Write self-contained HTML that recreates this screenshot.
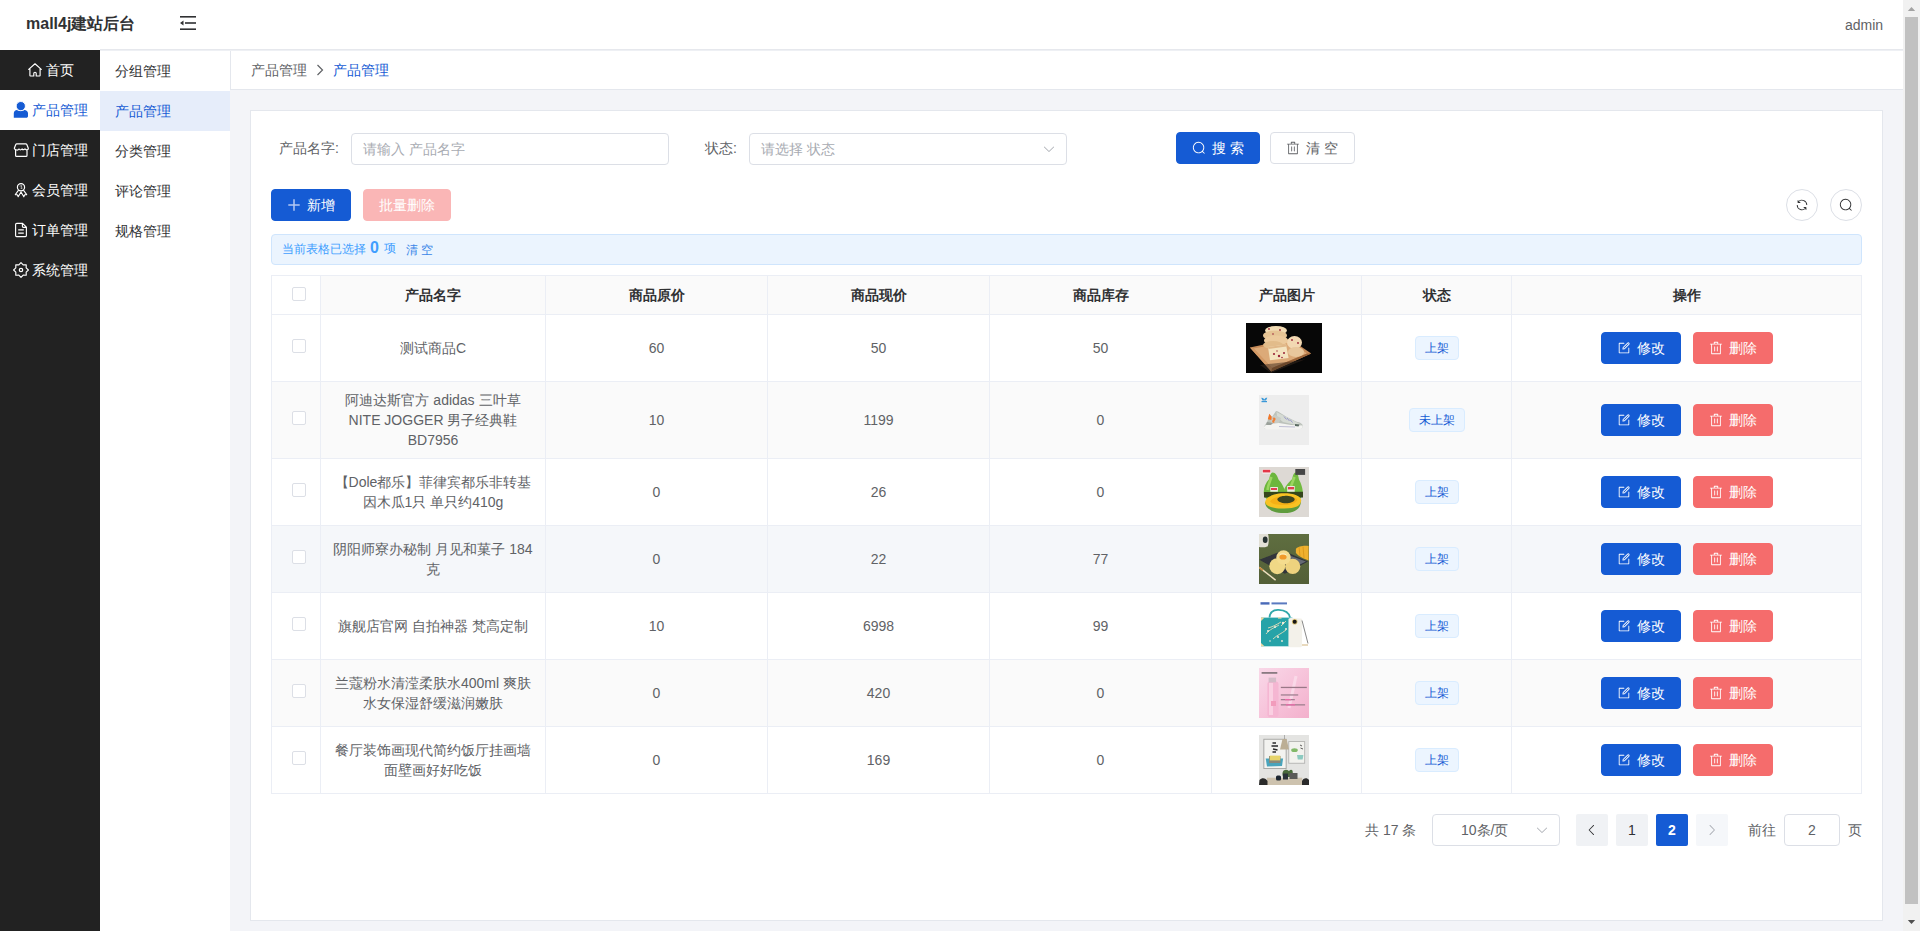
<!DOCTYPE html>
<html><head><meta charset="utf-8">
<style>
*{box-sizing:border-box;margin:0;padding:0}
html,body{width:1920px;height:931px;overflow:hidden;background:#fff}
body{font-family:"Liberation Sans",sans-serif;font-size:14px;color:#606266;position:relative}
.abs{position:absolute}
svg{display:block}
/* header */
#header{left:0;top:0;width:1903px;height:50px;background:#fff}
#logo{left:26px;top:13px;font-size:16px;font-weight:bold;color:#303133;line-height:22px;white-space:nowrap}
#fold{left:180px;top:16px;width:16px;height:14px}
#admin{left:1845px;top:15px;font-size:14px;color:#606266;line-height:20px}
#hline{left:100px;top:49px;width:1803px;height:2px;background:linear-gradient(#e6e8ed 50%,#eef0f4 50%);z-index:5}
/* sidebar */
#side{left:0;top:50px;width:100px;height:881px;background:#222}
.mi{position:absolute;left:0;width:100px;height:40px;color:#fff;font-size:14px;line-height:40px;white-space:nowrap}
.mi .ic{position:absolute;top:13px;width:14px;height:14px}
.mi .tx{position:absolute;top:0}
.mi.act{background:#fff;color:#155bd4}
#sub{left:100px;top:50px;width:130px;height:881px;background:#fff}
.si{position:absolute;left:0;width:130px;height:40px;line-height:40px;padding-left:15px;color:#303133;font-size:14px}
.si.act{background:#e6edfa;color:#155bd4}
/* main */
#main{left:230px;top:50px;width:1673px;height:881px;background:#f3f4f8}
#crumb{left:230px;top:50px;width:1673px;height:40px;background:#fff;border-left:1px solid #e4e7ed;border-bottom:1px solid #e4e7ed}
#card{left:250px;top:110px;width:1633px;height:811px;background:#fff;border:1px solid #e4e7ed}
/* scrollbar */
#sb{left:1903px;top:0;width:17px;height:931px;background:#f1f1f1}
#thumb{left:1905px;top:17px;width:13px;height:887px;background:#c1c1c1}
.lbl{position:absolute;font-size:14px;color:#606266;line-height:20px;white-space:nowrap}
.inp{position:absolute;height:32px;border:1px solid #dcdfe6;border-radius:4px;background:#fff}
.ph{position:absolute;left:11px;top:5px;line-height:20px;color:#a8abb2;font-size:14px;white-space:nowrap}
.btn{position:absolute;height:32px;border-radius:4px;font-size:14px;line-height:30px;white-space:nowrap;color:#fff}
.btn .ic{position:absolute;top:9px;width:14px;height:14px}
.btn .tx{position:absolute;top:0;line-height:30px}
.tag{height:24px;line-height:22px;font-size:12px;text-align:center;color:#155bd4;background:#ecf5ff;border:1px solid #d9ecff;border-radius:4px;white-space:nowrap}
.pimg{background:#ddd;overflow:hidden}
</style></head><body>
<div id="header" class="abs"></div>
<div id="logo" class="abs">mall4j建站后台</div>
<svg id="fold" class="abs" viewBox="0 0 16 14"><rect x="0" y="0" width="16" height="1.6" fill="#303133"/><rect x="5" y="6.2" width="11" height="1.6" fill="#303133"/><rect x="0" y="12.4" width="16" height="1.6" fill="#303133"/><path d="M0 7 L3.5 4.6 L3.5 9.4Z" fill="#303133"/></svg>
<div id="admin" class="abs">admin</div>
<div id="hline" class="abs"></div>

<div id="side" class="abs">
<div class="mi" style="top:0"><span class="tx" style="left:46px">首页</span></div>
<div class="mi act" style="top:40px"><span class="tx" style="left:32px">产品管理</span></div>
<div class="mi" style="top:80px"><span class="tx" style="left:32px">门店管理</span></div>
<div class="mi" style="top:120px"><span class="tx" style="left:32px">会员管理</span></div>
<div class="mi" style="top:160px"><span class="tx" style="left:32px">订单管理</span></div>
<div class="mi" style="top:200px"><span class="tx" style="left:32px">系统管理</span></div>
<svg class="abs" style="left:26px;top:11px" width="18" height="18" viewBox="26 61 18 18"><path d="M28.7 69.4 L35 63.8 L41.3 69.4 M29.9 68.4 V75.6 C29.9 75.9 30.1 76 30.4 76 H33.8 V73.2 C33.8 72.5 34.3 72.2 35 72.2 C35.7 72.2 36.2 72.5 36.2 73.2 V76 H39.6 C39.9 76 40.1 75.9 40.1 75.6 V68.4" fill="none" stroke="#fff" stroke-width="1.15" stroke-linejoin="round" stroke-linecap="round"/></svg><svg class="abs" style="left:12px;top:50px" width="18" height="20" viewBox="12 100 18 20"><path d="M13.8 117.8 V113.2 C13.8 111.2 15.2 109.9 17 109.9 C18.5 111.2 22.7 111.2 24.3 109.9 C26.3 109.9 28 111.2 28 113.2 V116.3 C28 117.2 27.2 117.8 26.3 117.8 Z" fill="#155bd4"/><circle cx="20.8" cy="106.1" r="4.6" fill="#155bd4" stroke="#fff" stroke-width="0.9"/></svg><svg class="abs" style="left:12px;top:91px" width="18" height="18" viewBox="12 141 18 18"><path d="M16.7 143.8 H25.8 C26.3 143.8 26.6 144.1 26.8 144.5 L28.3 148.3 C28.4 149.4 27.5 150 26.6 149.8 C25.8 149.7 25.3 149.2 25 148.8 C24.4 149.8 22.9 150.1 22 149 C21.2 150.1 19.6 150.1 19 149 C18.4 149.9 17.2 150.2 16.1 149.8 C15.1 149.6 14.3 149.1 14.3 148.3 L15.8 144.5 C16 144.1 16.3 143.8 16.7 143.8 Z M15.6 149.6 V155.4 C15.6 156 16 156.3 16.6 156.3 H26 C26.6 156.3 27 156 27 155.4 V149.6" fill="none" stroke="#fff" stroke-width="1.2" stroke-linejoin="round"/></svg><svg class="abs" style="left:12px;top:131px" width="18" height="18" viewBox="12 181 18 18"><circle cx="21" cy="187.3" r="3.6" fill="none" stroke="#fff" stroke-width="1.2"/><path d="M19.6 186.2 L21.8 185.6 L21 188.6 L22.6 188" fill="none" stroke="#fff" stroke-width="0.6"/><path d="M18.6 190.2 L15.3 194.6 L17.3 194.8 L18.2 196.8 L21 192 L23.8 196.8 L24.7 194.8 L26.7 194.6 L23.4 190.2" fill="none" stroke="#fff" stroke-width="1.1" stroke-linejoin="round"/></svg><svg class="abs" style="left:12px;top:171px" width="18" height="18" viewBox="12 221 18 18"><path d="M16.8 223.4 H22.6 L26.4 227.2 V235.6 C26.4 236.2 26 236.6 25.4 236.6 H16.6 C16 236.6 15.6 236.2 15.6 235.6 V224.6 C15.6 224 16 223.4 16.8 223.4 Z M22.4 223.6 V226.3 C22.4 226.9 22.7 227.3 23.3 227.3 H26.2" fill="none" stroke="#fff" stroke-width="1.15" stroke-linejoin="round"/><path d="M18.2 229.9 H23.8 M18.2 233.1 H23.8" stroke="#fff" stroke-width="1.1"/></svg><svg class="abs" style="left:12px;top:211px" width="18" height="18" viewBox="12 261 18 18"><path d="M21.00 262.60 L23.14 264.83 L26.23 264.77 L26.17 267.86 L28.40 270.00 L26.17 272.14 L26.23 275.23 L23.14 275.17 L21.00 277.40 L18.86 275.17 L15.77 275.23 L15.83 272.14 L13.60 270.00 L15.83 267.86 L15.77 264.77 L18.86 264.83Z" fill="none" stroke="#fff" stroke-width="1.15" stroke-linejoin="round"/><circle cx="21" cy="270" r="1.7" fill="none" stroke="#fff" stroke-width="1.2"/></svg></div>
<div id="sub" class="abs">
<div class="si" style="top:1px">分组管理</div>
<div class="si act" style="top:41px">产品管理</div>
<div class="si" style="top:81px">分类管理</div>
<div class="si" style="top:121px">评论管理</div>
<div class="si" style="top:161px">规格管理</div>
</div>
<div id="main" class="abs"></div>
<div id="crumb" class="abs"></div>
<div class="lbl" style="left:251px;top:60px;color:#606266">产品管理</div>
<svg class="abs" style="left:316px;top:64px" width="8" height="12" viewBox="0 0 8 12"><path d="M1.5 1 L6.5 6 L1.5 11" fill="none" stroke="#606266" stroke-width="1.2"/></svg>
<div class="lbl" style="left:333px;top:60px;color:#155bd4">产品管理</div>

<div id="card" class="abs"></div>


<div class="lbl" style="left:279px;top:138px">产品名字:</div>
<div class="inp" style="left:351px;top:133px;width:318px"><span class="ph">请输入 产品名字</span></div>
<div class="lbl" style="left:705px;top:138px">状态:</div>
<div class="inp" style="left:749px;top:133px;width:318px"><span class="ph">请选择 状态</span></div>
<svg class="abs" style="left:1042px;top:142px;color:#a8abb2;" width="14" height="14" viewBox="0 0 1024 1024"><path fill="currentColor" d="M831.872 340.864 512 652.672 192.128 340.864a30.592 30.592 0 0 0-42.752 0 29.12 29.12 0 0 0 0 41.6L489.664 714.24a32 32 0 0 0 44.672 0l340.288-331.712a29.12 29.12 0 0 0 0-41.728 30.592 30.592 0 0 0-42.752 0z"/></svg>
<div class="btn" style="left:1176px;top:132px;width:84px;background:#155bd4;border:1px solid #155bd4"></div>
<svg class="abs" style="left:1192px;top:141px;color:#fff;" width="14" height="14" viewBox="0 0 1024 1024"><path fill="currentColor" d="m795.904 750.72 124.992 124.928a32 32 0 0 1-45.248 45.248L750.656 795.904a416 416 0 1 1 45.248-45.248zM480 832a352 352 0 1 0 0-704 352 352 0 0 0 0 704"/></svg>
<div class="lbl" style="left:1212px;top:138px;color:#fff">搜 索</div>
<div class="btn" style="left:1270px;top:132px;width:85px;background:#fff;border:1px solid #dcdfe6"></div>
<svg class="abs" style="left:1286px;top:141px;color:#606266;" width="14" height="14" viewBox="0 0 1024 1024"><path fill="currentColor" d="M160 256H96a32 32 0 0 1 0-64h256V95.936a32 32 0 0 1 32-32h256a32 32 0 0 1 32 32V192h256a32 32 0 1 1 0 64h-64v672a32 32 0 0 1-32 32H192a32 32 0 0 1-32-32zm448-64v-64H416v64zM224 896h576V256H224zm192-128a32 32 0 0 1-32-32V416a32 32 0 0 1 64 0v320a32 32 0 0 1-32 32m192 0a32 32 0 0 1-32-32V416a32 32 0 0 1 64 0v320a32 32 0 0 1-32 32"/></svg>
<div class="lbl" style="left:1306px;top:138px;color:#606266">清 空</div>

<div class="btn" style="left:271px;top:189px;width:80px;background:#155bd4;border:1px solid #155bd4"></div>
<svg class="abs" style="left:288px;top:199px" width="12" height="12" viewBox="0 0 12 12"><path d="M6 0.3 V11.7 M0.3 6 H11.7" stroke="#b4c8f2" stroke-width="1.5"/></svg>
<div class="lbl" style="left:307px;top:195px;color:#fff">新增</div>
<div class="btn" style="left:363px;top:189px;width:88px;background:#fab6b6;border:1px solid #fab6b6"></div>
<div class="lbl" style="left:379px;top:195px;color:#fff">批量删除</div>

<div class="abs" style="left:1786px;top:189px;width:32px;height:32px;border:1px solid #dcdfe6;border-radius:50%;background:#fff"></div>
<svg class="abs" style="left:1795px;top:198px;color:#303133;" width="14" height="14" viewBox="0 0 1024 1024"><path fill="currentColor" d="M771.776 794.88A384 384 0 0 1 128 512h64a320 320 0 0 0 555.712 216.448H654.72a32 32 0 1 1 0-64h149.056a32 32 0 0 1 32 32v148.928a32 32 0 1 1-64 0v-50.56zM276.288 295.616h92.992a32 32 0 0 1 0 64H220.16a32 32 0 0 1-32-32V178.56a32 32 0 0 1 64 0v50.56A384 384 0 0 1 896.128 512h-64a320 320 0 0 0-555.776-216.384z"/></svg>
<div class="abs" style="left:1830px;top:189px;width:32px;height:32px;border:1px solid #dcdfe6;border-radius:50%;background:#fff"></div>
<svg class="abs" style="left:1839px;top:198px;color:#303133;" width="14" height="14" viewBox="0 0 1024 1024"><path fill="currentColor" d="m795.904 750.72 124.992 124.928a32 32 0 0 1-45.248 45.248L750.656 795.904a416 416 0 1 1 45.248-45.248zM480 832a352 352 0 1 0 0-704 352 352 0 0 0 0 704"/></svg>

<div class="abs" style="left:271px;top:234px;width:1591px;height:31px;background:#ebf4fe;border:1px solid #cfe5fd;border-radius:4px"></div>
<div class="lbl" style="left:282px;top:239px;font-size:12px;color:#409eff">当前表格已选择</div>
<div class="lbl" style="left:370px;top:238px;font-size:16px;font-weight:bold;color:#409eff">0</div>
<div class="lbl" style="left:384px;top:238px;font-size:12px;color:#409eff">项</div>
<div class="lbl" style="left:406px;top:240px;font-size:12px;color:#3a86e8">清 空</div>

<!--TABLE-->
<div class="abs" style="left:272px;top:276px;width:1589px;height:38px;background:#fafafa"></div>
<div class="abs" style="left:272px;top:315px;width:1589px;height:66px;background:#fff"></div>
<div class="abs" style="left:272px;top:382px;width:1589px;height:76px;background:#fafafa"></div>
<div class="abs" style="left:272px;top:459px;width:1589px;height:66px;background:#fff"></div>
<div class="abs" style="left:272px;top:526px;width:1589px;height:66px;background:#f5f7fa"></div>
<div class="abs" style="left:272px;top:593px;width:1589px;height:66px;background:#fff"></div>
<div class="abs" style="left:272px;top:660px;width:1589px;height:66px;background:#fafafa"></div>
<div class="abs" style="left:272px;top:727px;width:1589px;height:66px;background:#fff"></div>
<div class="abs" style="left:272px;top:276px;width:48px;height:38px;background:#fff"></div>
<div class="abs" style="left:271px;top:275px;width:1px;height:519px;background:#ebeef5"></div>
<div class="abs" style="left:320px;top:275px;width:1px;height:519px;background:#ebeef5"></div>
<div class="abs" style="left:545px;top:275px;width:1px;height:519px;background:#ebeef5"></div>
<div class="abs" style="left:767px;top:275px;width:1px;height:519px;background:#ebeef5"></div>
<div class="abs" style="left:989px;top:275px;width:1px;height:519px;background:#ebeef5"></div>
<div class="abs" style="left:1211px;top:275px;width:1px;height:519px;background:#ebeef5"></div>
<div class="abs" style="left:1361px;top:275px;width:1px;height:519px;background:#ebeef5"></div>
<div class="abs" style="left:1511px;top:275px;width:1px;height:519px;background:#ebeef5"></div>
<div class="abs" style="left:1861px;top:275px;width:1px;height:519px;background:#ebeef5"></div>
<div class="abs" style="left:271px;top:275px;width:1591px;height:1px;background:#ebeef5"></div>
<div class="abs" style="left:271px;top:314px;width:1591px;height:1px;background:#ebeef5"></div>
<div class="abs" style="left:271px;top:381px;width:1591px;height:1px;background:#ebeef5"></div>
<div class="abs" style="left:271px;top:458px;width:1591px;height:1px;background:#ebeef5"></div>
<div class="abs" style="left:271px;top:525px;width:1591px;height:1px;background:#ebeef5"></div>
<div class="abs" style="left:271px;top:592px;width:1591px;height:1px;background:#ebeef5"></div>
<div class="abs" style="left:271px;top:659px;width:1591px;height:1px;background:#ebeef5"></div>
<div class="abs" style="left:271px;top:726px;width:1591px;height:1px;background:#ebeef5"></div>
<div class="abs" style="left:271px;top:793px;width:1591px;height:1px;background:#ebeef5"></div>
<div class="abs" style="left:321px;top:284.5px;width:224px;line-height:20px;text-align:center;white-space:nowrap;font-weight:bold;color:#303133">产品名字</div>
<div class="abs" style="left:546px;top:284.5px;width:221px;line-height:20px;text-align:center;white-space:nowrap;font-weight:bold;color:#303133">商品原价</div>
<div class="abs" style="left:768px;top:284.5px;width:221px;line-height:20px;text-align:center;white-space:nowrap;font-weight:bold;color:#303133">商品现价</div>
<div class="abs" style="left:990px;top:284.5px;width:221px;line-height:20px;text-align:center;white-space:nowrap;font-weight:bold;color:#303133">商品库存</div>
<div class="abs" style="left:1212px;top:284.5px;width:149px;line-height:20px;text-align:center;white-space:nowrap;font-weight:bold;color:#303133">产品图片</div>
<div class="abs" style="left:1362px;top:284.5px;width:149px;line-height:20px;text-align:center;white-space:nowrap;font-weight:bold;color:#303133">状态</div>
<div class="abs" style="left:1512px;top:284.5px;width:349px;line-height:20px;text-align:center;white-space:nowrap;font-weight:bold;color:#303133">操作</div>
<div class="abs" style="left:292px;top:287px;width:14px;height:14px;border:1px solid #dcdfe6;border-radius:2px;background:#fff"></div>
<div class="abs" style="left:292px;top:339px;width:14px;height:14px;border:1px solid #dcdfe6;border-radius:2px;background:#fff"></div>
<div class="abs" style="left:321px;top:338.0px;width:224px;line-height:20px;text-align:center;white-space:nowrap;">测试商品C</div>
<div class="abs" style="left:546px;top:338.0px;width:221px;line-height:20px;text-align:center;white-space:nowrap;">60</div>
<div class="abs" style="left:768px;top:338.0px;width:221px;line-height:20px;text-align:center;white-space:nowrap;">50</div>
<div class="abs" style="left:990px;top:338.0px;width:221px;line-height:20px;text-align:center;white-space:nowrap;">50</div>
<div class="abs pimg img1" style="left:1246px;top:323px;width:76px;height:50px"><!--img1--><svg width="76" height="50" viewBox="0 0 76 50"><rect width="76" height="50" fill="#070707"/> <defs><filter id="b1"><feGaussianBlur stdDeviation="0.7"/></filter></defs> <g filter="url(#b1)"> <path d="M3.9 24.4 L44 16 L65.2 30.5 L25.3 48.5Z" fill="#c48a58"/> <path d="M7.5 25.5 L44 18.5 L61 30.5 L26 45Z" fill="#dcaa78"/> <path d="M3.9 24.4 L25.3 48.5 L26 45 L7.5 25.5Z" fill="#d49a66"/> <path d="M25.3 48.5 L65.2 30.5 L61 30.5 L26 45Z" fill="#9a6438"/> <path d="M14 42 L25 50 L60 36 L50 38Z" fill="#3a2a20" opacity="0.5"/> <ellipse cx="30" cy="7.5" rx="11" ry="4.5" fill="#f2dcb4"/> <ellipse cx="29" cy="12.5" rx="12" ry="5" fill="#e6c494"/> <ellipse cx="30" cy="17.5" rx="12" ry="5" fill="#ecca9c"/> <ellipse cx="27" cy="22" rx="10" ry="4" fill="#e2bc8a"/> <ellipse cx="48.5" cy="19.5" rx="7.5" ry="6.5" fill="#f2d8b2"/> <ellipse cx="50" cy="29" rx="8" ry="5" fill="#e8c79c"/> <path d="M22 24 L40 21.5 L42.6 35 L24 37.2Z" fill="#f4e4c0"/> <path d="M22 24 L40 21.5 L40.5 23.5 L22.5 26Z" fill="#e0b888"/> </g> <g fill="#9a2438"><circle cx="23" cy="6" r="0.9"/><circle cx="34" cy="7" r="0.9"/><circle cx="27" cy="11" r="0.8"/><circle cx="46" cy="17" r="0.9"/><circle cx="52" cy="20" r="0.9"/><circle cx="28" cy="31" r="1.1"/><circle cx="33" cy="33" r="1.2"/><circle cx="38" cy="30" r="1"/><circle cx="31" cy="28" r="0.7"/><circle cx="36" cy="34.5" r="0.8"/></g> </svg><!--/img1--></div>
<div class="abs tag" style="left:1415px;top:336px;width:44px">上架</div>
<div class="btn" style="left:1601px;top:332px;width:80px;background:#155bd4;border:1px solid #155bd4"></div>
<svg class="abs" style="left:1617px;top:341px;color:#fff" width="14" height="14" viewBox="0 0 1024 1024"><path fill="currentColor" d="M832 512a32 32 0 1 1 64 0v352a32 32 0 0 1-32 32H160a32 32 0 0 1-32-32V160a32 32 0 0 1 32-32h352a32 32 0 0 1 0 64H192v640h640z"/><path fill="currentColor" d="m469.952 554.24 52.8-7.552L847.104 222.4a32 32 0 1 0-45.248-45.248L477.44 501.44l-7.552 52.8zm422.4-422.4a96 96 0 0 1 0 135.808l-331.84 331.84a32 32 0 0 1-18.112 9.088L436.8 623.68a32 32 0 0 1-36.224-36.224l15.104-105.6a32 32 0 0 1 9.024-18.112l331.904-331.84a96 96 0 0 1 135.744 0z"/></svg>
<div class="lbl" style="left:1637px;top:338px;color:#fff">修改</div>
<div class="btn" style="left:1693px;top:332px;width:80px;background:#f56c6c;border:1px solid #f56c6c"></div>
<svg class="abs" style="left:1709px;top:341px;color:#fff" width="14" height="14" viewBox="0 0 1024 1024"><path fill="currentColor" d="M160 256H96a32 32 0 0 1 0-64h256V95.936a32 32 0 0 1 32-32h256a32 32 0 0 1 32 32V192h256a32 32 0 1 1 0 64h-64v672a32 32 0 0 1-32 32H192a32 32 0 0 1-32-32zm448-64v-64H416v64zM224 896h576V256H224zm192-128a32 32 0 0 1-32-32V416a32 32 0 0 1 64 0v320a32 32 0 0 1-32 32m192 0a32 32 0 0 1-32-32V416a32 32 0 0 1 64 0v320a32 32 0 0 1-32 32"/></svg>
<div class="lbl" style="left:1729px;top:338px;color:#fff">删除</div>
<div class="abs" style="left:292px;top:411px;width:14px;height:14px;border:1px solid #dcdfe6;border-radius:2px;background:#fff"></div>
<div class="abs" style="left:321px;top:390.0px;width:224px;line-height:20px;text-align:center;white-space:nowrap;">阿迪达斯官方 adidas 三叶草<br>NITE JOGGER 男子经典鞋<br>BD7956</div>
<div class="abs" style="left:546px;top:410.0px;width:221px;line-height:20px;text-align:center;white-space:nowrap;">10</div>
<div class="abs" style="left:768px;top:410.0px;width:221px;line-height:20px;text-align:center;white-space:nowrap;">1199</div>
<div class="abs" style="left:990px;top:410.0px;width:221px;line-height:20px;text-align:center;white-space:nowrap;">0</div>
<div class="abs pimg img2" style="left:1259px;top:395px;width:50px;height:50px"><!--img2--><svg width="50" height="50" viewBox="0 0 50 50"><rect width="50" height="50" fill="#ededed"/> <defs><filter id="b2"><feGaussianBlur stdDeviation="0.6"/></filter></defs> <g filter="url(#b2)"> <path d="M2.3 3 C3.5 2.5 4.5 3.5 5.3 4.5 C6 3.2 7 2.5 8.3 2.8 L7 5.5 L3.5 5.5Z" fill="#3a98d8"/> <rect x="2.5" y="6" width="5.5" height="1.2" fill="#3a98d8"/> <path d="M4.5 32.5 C6 30 7.5 28 8.5 26 L10.3 19 L13 22 L17 16 L19 16.5 L27 21.5 L37 26.5 C41.5 27.5 44 29 44 31.5 L43 33.5 L6 34Z" fill="#bcc2bb"/> <path d="M17.5 17 L27 22 L37 27 L42 29.5 L35 29.5 L24 27 L18 22Z" fill="#d6dbd4"/> <path d="M11 23 L16 20 L22 23 L20 28 L12 28Z" fill="#c8ccc6"/> <path d="M8 29 L20 28 L32 30 L43.8 30.5 L43.5 33.5 L38 34.5 L8 34.5 L3.8 33Z" fill="#f4f4f2"/> <path d="M10.3 18.8 L12.7 21.8 L12.4 25 L8.8 24.2Z" fill="#f47628"/> <path d="M13.3 23 C15 21.8 17 22.5 16.5 24.5 C16 26 14.5 26.5 15.5 28 L13.5 27.5 C12.5 26 14 25 14.5 24Z" fill="#f07e36"/> <path d="M8 27 L14 28 L12 30 L7 30Z" fill="#9aa09a"/> <path d="M25 21.5 L27.5 24.5 M28 23 L30.5 26 M31 24.5 L33.5 27.5" stroke="#8a88c8" stroke-width="0.8"/> <path d="M36 29 L40.5 29.5 L39.5 31.5 L36 31Z" fill="#5a6a62"/> <path d="M20 31.5 L36 32" stroke="#9a9ac0" stroke-width="0.6"/> </g></svg><!--/img2--></div>
<div class="abs tag" style="left:1409px;top:408px;width:56px">未上架</div>
<div class="btn" style="left:1601px;top:404px;width:80px;background:#155bd4;border:1px solid #155bd4"></div>
<svg class="abs" style="left:1617px;top:413px;color:#fff" width="14" height="14" viewBox="0 0 1024 1024"><path fill="currentColor" d="M832 512a32 32 0 1 1 64 0v352a32 32 0 0 1-32 32H160a32 32 0 0 1-32-32V160a32 32 0 0 1 32-32h352a32 32 0 0 1 0 64H192v640h640z"/><path fill="currentColor" d="m469.952 554.24 52.8-7.552L847.104 222.4a32 32 0 1 0-45.248-45.248L477.44 501.44l-7.552 52.8zm422.4-422.4a96 96 0 0 1 0 135.808l-331.84 331.84a32 32 0 0 1-18.112 9.088L436.8 623.68a32 32 0 0 1-36.224-36.224l15.104-105.6a32 32 0 0 1 9.024-18.112l331.904-331.84a96 96 0 0 1 135.744 0z"/></svg>
<div class="lbl" style="left:1637px;top:410px;color:#fff">修改</div>
<div class="btn" style="left:1693px;top:404px;width:80px;background:#f56c6c;border:1px solid #f56c6c"></div>
<svg class="abs" style="left:1709px;top:413px;color:#fff" width="14" height="14" viewBox="0 0 1024 1024"><path fill="currentColor" d="M160 256H96a32 32 0 0 1 0-64h256V95.936a32 32 0 0 1 32-32h256a32 32 0 0 1 32 32V192h256a32 32 0 1 1 0 64h-64v672a32 32 0 0 1-32 32H192a32 32 0 0 1-32-32zm448-64v-64H416v64zM224 896h576V256H224zm192-128a32 32 0 0 1-32-32V416a32 32 0 0 1 64 0v320a32 32 0 0 1-32 32m192 0a32 32 0 0 1-32-32V416a32 32 0 0 1 64 0v320a32 32 0 0 1-32 32"/></svg>
<div class="lbl" style="left:1729px;top:410px;color:#fff">删除</div>
<div class="abs" style="left:292px;top:483px;width:14px;height:14px;border:1px solid #dcdfe6;border-radius:2px;background:#fff"></div>
<div class="abs" style="left:321px;top:472.0px;width:224px;line-height:20px;text-align:center;white-space:nowrap;">【Dole都乐】菲律宾都乐非转基<br>因木瓜1只 单只约410g</div>
<div class="abs" style="left:546px;top:482.0px;width:221px;line-height:20px;text-align:center;white-space:nowrap;">0</div>
<div class="abs" style="left:768px;top:482.0px;width:221px;line-height:20px;text-align:center;white-space:nowrap;">26</div>
<div class="abs" style="left:990px;top:482.0px;width:221px;line-height:20px;text-align:center;white-space:nowrap;">0</div>
<div class="abs pimg img3" style="left:1259px;top:467px;width:50px;height:50px"><!--img3--><svg width="50" height="50" viewBox="0 0 50 50"><rect width="50" height="50" fill="#dcd8d3"/> <defs><filter id="b3"><feGaussianBlur stdDeviation="0.7"/></filter></defs> <g filter="url(#b3)"> <rect width="50" height="50" fill="#ddd9d4"/> <path d="M13.7 5.5 C11.5 6 10.8 9 10.2 12 C7 15.5 4.7 20 4.7 25.5 C4.7 30.5 8 33.5 14.5 33.5 C21.5 33.5 25.8 30.5 25.8 25.5 C25.8 20.5 22 15.5 19.5 12.5 C18.5 9 16.5 5.5 13.7 5.5Z" fill="#6cb63c"/> <path d="M36.6 5.5 C34.5 6 33.8 9 33.2 12 C30 15.5 24.7 20 24.7 25.5 C24.7 30.5 28 33.5 34.5 33.5 C40.5 33.5 43.8 30.5 43.8 25.5 C43.8 20.5 41.5 15.5 40 12.5 C39.5 9 38.5 5.5 36.6 5.5Z" fill="#72ba40"/> <path d="M12.5 10 C11 14 9 18 8.5 23" stroke="#9cd660" stroke-width="2.6" fill="none"/> <path d="M35.5 10 C34 14 32 18 31 23" stroke="#9cd660" stroke-width="2.6" fill="none"/> <path d="M5 25 L44 24.7 L44 30.5 L5 30.5Z" fill="#34441e"/> <rect x="11.3" y="20" width="7.6" height="4.7" fill="#ecebe2"/><rect x="12" y="21" width="6" height="2" fill="#e04050"/> <rect x="28.2" y="19" width="7.5" height="5.7" fill="#ecebe2"/><rect x="29" y="20" width="6" height="2.4" fill="#e04050"/> <path d="M6.1 35 C6 41 13 46.1 25 46.1 C38 46.1 42 40 42.1 33.5 L6.1 35Z" fill="#5f9c3e"/> <path d="M6.1 35 C7 29 16 26.5 25 26.3 C35 26.3 42 29 42.1 33.5 C42 38.5 37 41.5 25 41.5 C15 41.5 6.2 39.5 6.1 35Z" fill="#f8c224"/> <path d="M11 34.5 C13 31 19 29 26 29 C32 29 37 30.5 38.5 33 C37 36 32 38 25 38 C18 38 12.5 37 11 34.5Z" fill="#f4b018"/> <path d="M18.3 32 C20 29.5 24 28.8 28 28.8 C32 29 35.7 30.5 35.7 32.5 C35 35 31 36.3 27 36.3 C22 36.3 18.5 34.5 18.3 32Z" fill="#3a4420"/> </g> <rect x="3.2" y="2.2" width="8.7" height="4.5" rx="1" fill="#f4eaea"/><rect x="3.8" y="2.8" width="7.5" height="2.6" fill="#e43848"/> <rect x="36.3" y="2" width="9.8" height="5.9" fill="#464646"/> </svg><!--/img3--></div>
<div class="abs tag" style="left:1415px;top:480px;width:44px">上架</div>
<div class="btn" style="left:1601px;top:476px;width:80px;background:#155bd4;border:1px solid #155bd4"></div>
<svg class="abs" style="left:1617px;top:485px;color:#fff" width="14" height="14" viewBox="0 0 1024 1024"><path fill="currentColor" d="M832 512a32 32 0 1 1 64 0v352a32 32 0 0 1-32 32H160a32 32 0 0 1-32-32V160a32 32 0 0 1 32-32h352a32 32 0 0 1 0 64H192v640h640z"/><path fill="currentColor" d="m469.952 554.24 52.8-7.552L847.104 222.4a32 32 0 1 0-45.248-45.248L477.44 501.44l-7.552 52.8zm422.4-422.4a96 96 0 0 1 0 135.808l-331.84 331.84a32 32 0 0 1-18.112 9.088L436.8 623.68a32 32 0 0 1-36.224-36.224l15.104-105.6a32 32 0 0 1 9.024-18.112l331.904-331.84a96 96 0 0 1 135.744 0z"/></svg>
<div class="lbl" style="left:1637px;top:482px;color:#fff">修改</div>
<div class="btn" style="left:1693px;top:476px;width:80px;background:#f56c6c;border:1px solid #f56c6c"></div>
<svg class="abs" style="left:1709px;top:485px;color:#fff" width="14" height="14" viewBox="0 0 1024 1024"><path fill="currentColor" d="M160 256H96a32 32 0 0 1 0-64h256V95.936a32 32 0 0 1 32-32h256a32 32 0 0 1 32 32V192h256a32 32 0 1 1 0 64h-64v672a32 32 0 0 1-32 32H192a32 32 0 0 1-32-32zm448-64v-64H416v64zM224 896h576V256H224zm192-128a32 32 0 0 1-32-32V416a32 32 0 0 1 64 0v320a32 32 0 0 1-32 32m192 0a32 32 0 0 1-32-32V416a32 32 0 0 1 64 0v320a32 32 0 0 1-32 32"/></svg>
<div class="lbl" style="left:1729px;top:482px;color:#fff">删除</div>
<div class="abs" style="left:292px;top:550px;width:14px;height:14px;border:1px solid #dcdfe6;border-radius:2px;background:#fff"></div>
<div class="abs" style="left:321px;top:539.0px;width:224px;line-height:20px;text-align:center;white-space:nowrap;">阴阳师寮办秘制 月见和菓子 184<br>克</div>
<div class="abs" style="left:546px;top:549.0px;width:221px;line-height:20px;text-align:center;white-space:nowrap;">0</div>
<div class="abs" style="left:768px;top:549.0px;width:221px;line-height:20px;text-align:center;white-space:nowrap;">22</div>
<div class="abs" style="left:990px;top:549.0px;width:221px;line-height:20px;text-align:center;white-space:nowrap;">77</div>
<div class="abs pimg img4" style="left:1259px;top:534px;width:50px;height:50px"><!--img4--><svg width="50" height="50" viewBox="0 0 50 50"><defs><linearGradient id="g4" x1="0" y1="0" x2="0" y2="1"><stop offset="0" stop-color="#5f6e40"/><stop offset="1" stop-color="#535f37"/></linearGradient><filter id="b4"><feGaussianBlur stdDeviation="0.7"/></filter></defs> <rect width="50" height="50" fill="url(#g4)"/> <g filter="url(#b4)"> <path d="M0 0 H9 C10 3 10 10 8.5 12.5 C6 13.5 2 13.5 0 13Z" fill="#e2e0d6"/> <ellipse cx="6.2" cy="5.8" rx="2.4" ry="3.3" fill="#283030"/> <path d="M0.3 25.8 L24 16.6 L49 27.6 L25.8 39.8 Z" fill="#30343a"/> <path d="M24 19 L47 27.5 L30 36 Z" fill="#7c828c" opacity="0.7"/> <path d="M36.9 15 C39 12 45 11.5 49.6 12 L49.6 26.4 C45 25 39 22 36.9 19Z" fill="#f0b12e"/> <path d="M40 13 L41 22 M44 12.5 L45 24" stroke="#d89418" stroke-width="0.8"/> <circle cx="18.3" cy="32.2" r="8" fill="#f0d886"/> <circle cx="33.7" cy="32.4" r="7.6" fill="#eed27e"/> <circle cx="24.5" cy="23.5" r="7.2" fill="#f4dc8e"/> <ellipse cx="24" cy="23" rx="3.6" ry="2.6" fill="#f29a2c"/> <path d="M21 20.5 C22 19.5 26 19.5 27.5 21" stroke="#fff4d0" stroke-width="0.8" fill="none"/> <path d="M0.3 33.4 L16.6 46.1" stroke="#efe0c0" stroke-width="1.4"/> <path d="M0.3 33.4 L4 36.3" stroke="#c8883a" stroke-width="1.5"/> </g></svg><!--/img4--></div>
<div class="abs tag" style="left:1415px;top:547px;width:44px">上架</div>
<div class="btn" style="left:1601px;top:543px;width:80px;background:#155bd4;border:1px solid #155bd4"></div>
<svg class="abs" style="left:1617px;top:552px;color:#fff" width="14" height="14" viewBox="0 0 1024 1024"><path fill="currentColor" d="M832 512a32 32 0 1 1 64 0v352a32 32 0 0 1-32 32H160a32 32 0 0 1-32-32V160a32 32 0 0 1 32-32h352a32 32 0 0 1 0 64H192v640h640z"/><path fill="currentColor" d="m469.952 554.24 52.8-7.552L847.104 222.4a32 32 0 1 0-45.248-45.248L477.44 501.44l-7.552 52.8zm422.4-422.4a96 96 0 0 1 0 135.808l-331.84 331.84a32 32 0 0 1-18.112 9.088L436.8 623.68a32 32 0 0 1-36.224-36.224l15.104-105.6a32 32 0 0 1 9.024-18.112l331.904-331.84a96 96 0 0 1 135.744 0z"/></svg>
<div class="lbl" style="left:1637px;top:549px;color:#fff">修改</div>
<div class="btn" style="left:1693px;top:543px;width:80px;background:#f56c6c;border:1px solid #f56c6c"></div>
<svg class="abs" style="left:1709px;top:552px;color:#fff" width="14" height="14" viewBox="0 0 1024 1024"><path fill="currentColor" d="M160 256H96a32 32 0 0 1 0-64h256V95.936a32 32 0 0 1 32-32h256a32 32 0 0 1 32 32V192h256a32 32 0 1 1 0 64h-64v672a32 32 0 0 1-32 32H192a32 32 0 0 1-32-32zm448-64v-64H416v64zM224 896h576V256H224zm192-128a32 32 0 0 1-32-32V416a32 32 0 0 1 64 0v320a32 32 0 0 1-32 32m192 0a32 32 0 0 1-32-32V416a32 32 0 0 1 64 0v320a32 32 0 0 1-32 32"/></svg>
<div class="lbl" style="left:1729px;top:549px;color:#fff">删除</div>
<div class="abs" style="left:292px;top:617px;width:14px;height:14px;border:1px solid #dcdfe6;border-radius:2px;background:#fff"></div>
<div class="abs" style="left:321px;top:616.0px;width:224px;line-height:20px;text-align:center;white-space:nowrap;">旗舰店官网 自拍神器 梵高定制</div>
<div class="abs" style="left:546px;top:616.0px;width:221px;line-height:20px;text-align:center;white-space:nowrap;">10</div>
<div class="abs" style="left:768px;top:616.0px;width:221px;line-height:20px;text-align:center;white-space:nowrap;">6998</div>
<div class="abs" style="left:990px;top:616.0px;width:221px;line-height:20px;text-align:center;white-space:nowrap;">99</div>
<div class="abs pimg img5" style="left:1259px;top:601px;width:50px;height:50px"><!--img5--><svg width="50" height="50" viewBox="0 0 50 50"><rect width="50" height="50" fill="#ffffff"/> <defs><filter id="b5"><feGaussianBlur stdDeviation="0.6"/></filter></defs> <g filter="url(#b5)"> <rect x="1.5" y="1.2" width="9" height="2.4" fill="#4a6ab8"/><rect x="12.5" y="1.4" width="15.5" height="2" fill="#5a7ac0"/> <path d="M10.5 16.5 C11 10.5 15 8.6 19.5 8.8 C25 9 30 11 31 16.5" fill="none" stroke="#30a8aa" stroke-width="1.8"/> <rect x="2" y="16.6" width="31.4" height="28.7" fill="#27a3a8"/> <path d="M7 33 C11 28 15 27 20 24 M9 27 C13 26 17 24 22 21 M14 38 C18 34 22 33 27 29 M22 25 L27 20" stroke="#e4dcb8" stroke-width="0.9" fill="none"/> <g fill="#f2eedc"><circle cx="9" cy="30" r="1"/><circle cx="16" cy="26" r="1"/><circle cx="24" cy="22" r="1.2"/><circle cx="27" cy="28" r="1"/><circle cx="19" cy="36" r="1"/><circle cx="11" cy="40" r="0.8"/><circle cx="23" cy="40" r="0.9"/></g> <path d="M2 16.6 H5.5 L2 20Z M2 45.3 H5.5 L2 42Z" fill="#ecd8a0"/> <rect x="19" y="16" width="3.5" height="1.6" fill="#e8dcb0"/> <path d="M29.5 18 C30 17 31 17 33 17 L42 17.5 C43 17.5 43.2 18.5 43.2 19 L43 45 C43 46 42 46.2 41 46.2 L31 46.2 C30 46.2 29.4 45.5 29.4 44.5Z" fill="#f3f1ea"/> <circle cx="35.7" cy="20.8" r="2.8" fill="#d8c070"/><circle cx="35.7" cy="20.8" r="2" fill="#151515"/> <path d="M43 19.5 L49 42.5" stroke="#6a6a6a" stroke-width="0.8"/> <path d="M43 44 L49 44" stroke="#d8c090" stroke-width="1.2"/> </g></svg><!--/img5--></div>
<div class="abs tag" style="left:1415px;top:614px;width:44px">上架</div>
<div class="btn" style="left:1601px;top:610px;width:80px;background:#155bd4;border:1px solid #155bd4"></div>
<svg class="abs" style="left:1617px;top:619px;color:#fff" width="14" height="14" viewBox="0 0 1024 1024"><path fill="currentColor" d="M832 512a32 32 0 1 1 64 0v352a32 32 0 0 1-32 32H160a32 32 0 0 1-32-32V160a32 32 0 0 1 32-32h352a32 32 0 0 1 0 64H192v640h640z"/><path fill="currentColor" d="m469.952 554.24 52.8-7.552L847.104 222.4a32 32 0 1 0-45.248-45.248L477.44 501.44l-7.552 52.8zm422.4-422.4a96 96 0 0 1 0 135.808l-331.84 331.84a32 32 0 0 1-18.112 9.088L436.8 623.68a32 32 0 0 1-36.224-36.224l15.104-105.6a32 32 0 0 1 9.024-18.112l331.904-331.84a96 96 0 0 1 135.744 0z"/></svg>
<div class="lbl" style="left:1637px;top:616px;color:#fff">修改</div>
<div class="btn" style="left:1693px;top:610px;width:80px;background:#f56c6c;border:1px solid #f56c6c"></div>
<svg class="abs" style="left:1709px;top:619px;color:#fff" width="14" height="14" viewBox="0 0 1024 1024"><path fill="currentColor" d="M160 256H96a32 32 0 0 1 0-64h256V95.936a32 32 0 0 1 32-32h256a32 32 0 0 1 32 32V192h256a32 32 0 1 1 0 64h-64v672a32 32 0 0 1-32 32H192a32 32 0 0 1-32-32zm448-64v-64H416v64zM224 896h576V256H224zm192-128a32 32 0 0 1-32-32V416a32 32 0 0 1 64 0v320a32 32 0 0 1-32 32m192 0a32 32 0 0 1-32-32V416a32 32 0 0 1 64 0v320a32 32 0 0 1-32 32"/></svg>
<div class="lbl" style="left:1729px;top:616px;color:#fff">删除</div>
<div class="abs" style="left:292px;top:684px;width:14px;height:14px;border:1px solid #dcdfe6;border-radius:2px;background:#fff"></div>
<div class="abs" style="left:321px;top:673.0px;width:224px;line-height:20px;text-align:center;white-space:nowrap;">兰蔻粉水清滢柔肤水400ml 爽肤<br>水女保湿舒缓滋润嫩肤</div>
<div class="abs" style="left:546px;top:683.0px;width:221px;line-height:20px;text-align:center;white-space:nowrap;">0</div>
<div class="abs" style="left:768px;top:683.0px;width:221px;line-height:20px;text-align:center;white-space:nowrap;">420</div>
<div class="abs" style="left:990px;top:683.0px;width:221px;line-height:20px;text-align:center;white-space:nowrap;">0</div>
<div class="abs pimg img6" style="left:1259px;top:668px;width:50px;height:50px"><!--img6--><svg width="50" height="50" viewBox="0 0 50 50"><defs><linearGradient id="g6" x1="0" y1="0" x2="1" y2="1"><stop offset="0" stop-color="#f9d8e8"/><stop offset="0.45" stop-color="#f7c6dc"/><stop offset="1" stop-color="#f3b0cc"/></linearGradient><filter id="b6"><feGaussianBlur stdDeviation="0.6"/></filter></defs> <rect width="50" height="50" fill="url(#g6)"/> <g filter="url(#b6)"> <path d="M37 8 L30 40" stroke="#fbe2ee" stroke-width="3" opacity="0.7"/> <rect x="8.4" y="13.5" width="11.1" height="35.5" rx="2.5" fill="#f5b6d2"/> <rect x="9.6" y="9.6" width="7.5" height="4.8" fill="#d4bcc8"/> <rect x="10" y="15" width="4" height="32" fill="#fad0e2"/> <rect x="12" y="33" width="5" height="5" fill="#f29cbc"/> <rect x="2.6" y="4" width="15.7" height="1.8" fill="#8a7a82"/> <rect x="21.8" y="18.8" width="26" height="1.3" fill="#9a7888"/> <rect x="21.8" y="26.3" width="17.4" height="1.3" fill="#a08090"/> <rect x="21.8" y="31" width="14" height="1.3" fill="#a08090"/><rect x="26" y="31" width="6" height="1.3" fill="#ea6aaa"/> <rect x="21.8" y="36.2" width="24.3" height="1.3" fill="#a08090"/><rect x="27" y="36.2" width="9" height="1.3" fill="#ea6aaa"/> </g></svg><!--/img6--></div>
<div class="abs tag" style="left:1415px;top:681px;width:44px">上架</div>
<div class="btn" style="left:1601px;top:677px;width:80px;background:#155bd4;border:1px solid #155bd4"></div>
<svg class="abs" style="left:1617px;top:686px;color:#fff" width="14" height="14" viewBox="0 0 1024 1024"><path fill="currentColor" d="M832 512a32 32 0 1 1 64 0v352a32 32 0 0 1-32 32H160a32 32 0 0 1-32-32V160a32 32 0 0 1 32-32h352a32 32 0 0 1 0 64H192v640h640z"/><path fill="currentColor" d="m469.952 554.24 52.8-7.552L847.104 222.4a32 32 0 1 0-45.248-45.248L477.44 501.44l-7.552 52.8zm422.4-422.4a96 96 0 0 1 0 135.808l-331.84 331.84a32 32 0 0 1-18.112 9.088L436.8 623.68a32 32 0 0 1-36.224-36.224l15.104-105.6a32 32 0 0 1 9.024-18.112l331.904-331.84a96 96 0 0 1 135.744 0z"/></svg>
<div class="lbl" style="left:1637px;top:683px;color:#fff">修改</div>
<div class="btn" style="left:1693px;top:677px;width:80px;background:#f56c6c;border:1px solid #f56c6c"></div>
<svg class="abs" style="left:1709px;top:686px;color:#fff" width="14" height="14" viewBox="0 0 1024 1024"><path fill="currentColor" d="M160 256H96a32 32 0 0 1 0-64h256V95.936a32 32 0 0 1 32-32h256a32 32 0 0 1 32 32V192h256a32 32 0 1 1 0 64h-64v672a32 32 0 0 1-32 32H192a32 32 0 0 1-32-32zm448-64v-64H416v64zM224 896h576V256H224zm192-128a32 32 0 0 1-32-32V416a32 32 0 0 1 64 0v320a32 32 0 0 1-32 32m192 0a32 32 0 0 1-32-32V416a32 32 0 0 1 64 0v320a32 32 0 0 1-32 32"/></svg>
<div class="lbl" style="left:1729px;top:683px;color:#fff">删除</div>
<div class="abs" style="left:292px;top:751px;width:14px;height:14px;border:1px solid #dcdfe6;border-radius:2px;background:#fff"></div>
<div class="abs" style="left:321px;top:740.0px;width:224px;line-height:20px;text-align:center;white-space:nowrap;">餐厅装饰画现代简约饭厅挂画墙<br>面壁画好好吃饭</div>
<div class="abs" style="left:546px;top:750.0px;width:221px;line-height:20px;text-align:center;white-space:nowrap;">0</div>
<div class="abs" style="left:768px;top:750.0px;width:221px;line-height:20px;text-align:center;white-space:nowrap;">169</div>
<div class="abs" style="left:990px;top:750.0px;width:221px;line-height:20px;text-align:center;white-space:nowrap;">0</div>
<div class="abs pimg img7" style="left:1259px;top:735px;width:50px;height:50px"><!--img7--><svg width="50" height="50" viewBox="0 0 50 50"><rect width="50" height="50" fill="#e6e6e4"/> <defs><filter id="b7"><feGaussianBlur stdDeviation="0.6"/></filter></defs> <g filter="url(#b7)"> <rect x="0" y="0" width="50" height="50" fill="#e4e4e2"/> <rect x="4.4" y="3.8" width="23.2" height="30.2" fill="#a2a2a0"/> <rect x="5.3" y="4.7" width="21.4" height="28.4" fill="#f3f3f0"/> <path d="M13.5 8 L17 8 M12.5 11 L19 11 M14 14 L18.5 15 M13.5 17 L17 17" stroke="#2a2a2a" stroke-width="1.3"/> <path d="M6.7 23.5 L24.1 23.5 L23 31 L8 31.5Z" fill="#4aa4bc"/> <rect x="10" y="21" width="11.5" height="7" fill="#8a8878"/> <rect x="10.8" y="20.6" width="10.4" height="4.8" fill="#e6d46a"/> <rect x="29.3" y="6.1" width="16.8" height="22.6" fill="#b4b4b2"/> <rect x="30.2" y="7" width="15" height="20.8" fill="#f2f2ee"/> <ellipse cx="35.5" cy="15.2" rx="3.3" ry="1.9" fill="#82b868"/> <path d="M38 20 L44.4 20 L43.6 24.5 L38.8 24.5Z" fill="#8ccac0"/> <path d="M41 10 L43 11 M41.5 13 L44 14" stroke="#333" stroke-width="0.8"/> <path d="M25.5 0 L25.5 4" stroke="#888" stroke-width="0.6"/> <path d="M23.5 4 L27.5 4 L30 14.5 L21 14.5Z" fill="#bcae94"/> <rect x="7.9" y="42.7" width="35.3" height="7.3" fill="#cdc2ae"/> <path d="M24 42 C22 36 26 33 30 36 C33 33 35 36 33 42Z" fill="#4a6a3a"/> <rect x="17" y="40.5" width="5" height="5" rx="1.5" fill="#1e2630"/> <rect x="24" y="38.5" width="5" height="6" fill="#2a3038"/> <rect x="30.5" y="38" width="8" height="6" fill="#5a5a58"/> <path d="M0 50 L0.5 45 C3 42 7 43 8.5 46 L8.5 50Z" fill="#2a2a2a"/> <path d="M50 50 L50 45 C48 42 44 43 43 46 L43 50Z" fill="#2a2a2a"/> </g></svg><!--/img7--></div>
<div class="abs tag" style="left:1415px;top:748px;width:44px">上架</div>
<div class="btn" style="left:1601px;top:744px;width:80px;background:#155bd4;border:1px solid #155bd4"></div>
<svg class="abs" style="left:1617px;top:753px;color:#fff" width="14" height="14" viewBox="0 0 1024 1024"><path fill="currentColor" d="M832 512a32 32 0 1 1 64 0v352a32 32 0 0 1-32 32H160a32 32 0 0 1-32-32V160a32 32 0 0 1 32-32h352a32 32 0 0 1 0 64H192v640h640z"/><path fill="currentColor" d="m469.952 554.24 52.8-7.552L847.104 222.4a32 32 0 1 0-45.248-45.248L477.44 501.44l-7.552 52.8zm422.4-422.4a96 96 0 0 1 0 135.808l-331.84 331.84a32 32 0 0 1-18.112 9.088L436.8 623.68a32 32 0 0 1-36.224-36.224l15.104-105.6a32 32 0 0 1 9.024-18.112l331.904-331.84a96 96 0 0 1 135.744 0z"/></svg>
<div class="lbl" style="left:1637px;top:750px;color:#fff">修改</div>
<div class="btn" style="left:1693px;top:744px;width:80px;background:#f56c6c;border:1px solid #f56c6c"></div>
<svg class="abs" style="left:1709px;top:753px;color:#fff" width="14" height="14" viewBox="0 0 1024 1024"><path fill="currentColor" d="M160 256H96a32 32 0 0 1 0-64h256V95.936a32 32 0 0 1 32-32h256a32 32 0 0 1 32 32V192h256a32 32 0 1 1 0 64h-64v672a32 32 0 0 1-32 32H192a32 32 0 0 1-32-32zm448-64v-64H416v64zM224 896h576V256H224zm192-128a32 32 0 0 1-32-32V416a32 32 0 0 1 64 0v320a32 32 0 0 1-32 32m192 0a32 32 0 0 1-32-32V416a32 32 0 0 1 64 0v320a32 32 0 0 1-32 32"/></svg>
<div class="lbl" style="left:1729px;top:750px;color:#fff">删除</div>
<!--/TABLE-->
<div id="sb" class="abs"></div>
<div id="thumb" class="abs"></div>
<!--PAG-->
<div class="lbl" style="left:1365px;top:820px">共 17 条</div>
<div class="inp" style="left:1432px;top:814px;width:128px"></div>
<div class="lbl" style="left:1461px;top:820px;color:#606266">10条/页</div>
<svg class="abs" style="left:1535px;top:823px;color:#a8abb2" width="14" height="14" viewBox="0 0 1024 1024"><path fill="currentColor" d="M831.872 340.864 512 652.672 192.128 340.864a30.592 30.592 0 0 0-42.752 0 29.12 29.12 0 0 0 0 41.6L489.664 714.24a32 32 0 0 0 44.672 0l340.288-331.712a29.12 29.12 0 0 0 0-41.728 30.592 30.592 0 0 0-42.752 0z"/></svg>
<div class="abs" style="left:1576px;top:814px;width:32px;height:32px;background:#f0f2f5;border-radius:2px"></div>
<svg class="abs" style="left:1585px;top:823px;color:#303133" width="14" height="14" viewBox="0 0 1024 1024"><path fill="currentColor" d="M609.408 149.376 277.76 489.6a32 32 0 0 0 0 44.672l331.648 340.352a29.12 29.12 0 0 0 41.728 0 30.592 30.592 0 0 0 0-42.752L339.264 511.936l311.872-319.872a30.592 30.592 0 0 0 0-42.688 29.12 29.12 0 0 0-41.728 0z"/></svg>
<div class="abs" style="left:1616px;top:814px;width:32px;height:32px;background:#f0f2f5;border-radius:2px;text-align:center;line-height:32px;color:#303133;font-size:14px">1</div>
<div class="abs" style="left:1656px;top:814px;width:32px;height:32px;background:#155bd4;border-radius:2px;text-align:center;line-height:32px;color:#fff;font-size:14px;font-weight:bold">2</div>
<div class="abs" style="left:1696px;top:814px;width:32px;height:32px;background:#f5f7fa;border-radius:2px"></div>
<svg class="abs" style="left:1705px;top:823px;color:#a8abb2" width="14" height="14" viewBox="0 0 1024 1024"><path fill="currentColor" d="M340.864 149.312a30.592 30.592 0 0 0 0 42.752L652.736 512 340.864 831.872a30.592 30.592 0 0 0 0 42.752 29.12 29.12 0 0 0 41.728 0L714.24 534.336a32 32 0 0 0 0-44.672L382.592 149.376a29.12 29.12 0 0 0-41.728 0z"/></svg>
<div class="lbl" style="left:1748px;top:820px">前往</div>
<div class="inp" style="left:1784px;top:814px;width:56px;text-align:center;line-height:30px;color:#606266">2</div>
<div class="lbl" style="left:1848px;top:820px">页</div>
<svg class="abs" style="left:1907px;top:6px" width="9" height="6" viewBox="0 0 9 6"><path d="M0.8 4.9 L4.5 0.9 L8.2 4.9Z" fill="#a3a3a3"/></svg>
<svg class="abs" style="left:1907px;top:919px" width="9" height="6" viewBox="0 0 9 6"><path d="M0.8 1 L4.5 5 L8.2 1Z" fill="#505050"/></svg>
<!--/PAG-->
</body></html>
